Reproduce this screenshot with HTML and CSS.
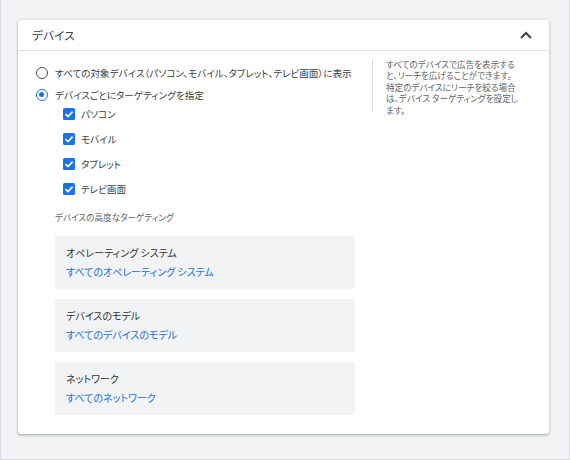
FILE: index.html
```html
<!DOCTYPE html>
<html lang="ja">
<head>
<meta charset="utf-8">
<link rel="stylesheet" href="styles.css">
</head>
<body>
<div class="page">
  <section class="card">
    <header class="card-head">
      <h2 class="card-title">デバイス</h2>
      <svg class="chevron" width="14" height="10" viewBox="0 0 14 10"><polyline points="2,8 7,3 12,8" fill="none" stroke="#3c4043" stroke-width="2"/></svg>
    </header>
    <div class="card-body">
      <div class="main">
        <label class="radio-row"><span class="radio"></span><span>すべての対象デバイス（パソコン、モバイル、タブレット、テレビ画面）に表示</span></label>
        <label class="radio-row"><span class="radio checked"></span><span>デバイスごとにターゲティングを指定</span></label>
        <ul class="checks">
          <li class="check-row"><span class="checkbox"><svg width="12" height="12" viewBox="0 0 12 12"><polyline points="2.5,6.2 5,8.6 9.6,3.6" fill="none" stroke="#fff" stroke-width="1.6"/></svg></span>パソコン</li>
          <li class="check-row"><span class="checkbox"><svg width="12" height="12" viewBox="0 0 12 12"><polyline points="2.5,6.2 5,8.6 9.6,3.6" fill="none" stroke="#fff" stroke-width="1.6"/></svg></span>モバイル</li>
          <li class="check-row"><span class="checkbox"><svg width="12" height="12" viewBox="0 0 12 12"><polyline points="2.5,6.2 5,8.6 9.6,3.6" fill="none" stroke="#fff" stroke-width="1.6"/></svg></span>タブレット</li>
          <li class="check-row"><span class="checkbox"><svg width="12" height="12" viewBox="0 0 12 12"><polyline points="2.5,6.2 5,8.6 9.6,3.6" fill="none" stroke="#fff" stroke-width="1.6"/></svg></span>テレビ画面</li>
        </ul>
        <div class="advanced">
          <div class="sub-head">デバイスの高度なターゲティング</div>
          <div class="box">
            <div class="box-title">オペレーティング システム</div>
            <a class="box-link">すべてのオペレーティング システム</a>
          </div>
          <div class="box">
            <div class="box-title">デバイスのモデル</div>
            <a class="box-link">すべてのデバイスのモデル</a>
          </div>
          <div class="box">
            <div class="box-title">ネットワーク</div>
            <a class="box-link">すべてのネットワーク</a>
          </div>
        </div>
      </div>
      <aside class="help">すべてのデバイスで広告を表示する<br>と、リーチを広げることができます。<br>特定のデバイスにリーチを絞る場合<br>は、デバイス ターゲティングを設定し<br>ます。</aside>
    </div>
  </section>
</div>
</body>
</html>
```
FILE: styles.css
```css
html, body {
  margin: 0;
  padding: 0;
}
body {
  width: 570px;
  height: 460px;
  background: #f1f3f4;
  font-family: "Noto Sans CJK JP", "Noto Sans", sans-serif;
  font-feature-settings: "palt";
  color: #3c4043;
  overflow: hidden;
}
.page {
  box-sizing: border-box;
  height: 460px;
  padding: 20px 20px 0 18px;
  border-left: 1px solid #dadce0;
  border-right: 1px solid #dadce0;
  border-bottom: 1px solid #dadce0;
}
.card {
  background: #fff;
  border-radius: 3px;
  height: 414px;
  box-shadow: 0 1px 2px rgba(60,64,67,.3), 0 1px 3px 1px rgba(60,64,67,.12);
  margin-left: -1px;
}
.card-head {
  height: 30px;
  border-bottom: 1px solid #e3e3e3;
  display: flex;
  align-items: center;
  justify-content: space-between;
  padding: 0 16px 0 14px;
}
.card-title {
  margin: 0;
  font-size: 11.5px;
  font-weight: normal;
  color: #3c4043;
  letter-spacing: 0.3px;
}
.chevron { display: block; }
.card-body {
  display: flex;
  padding: 11px 0 0 18px;
}
.main {
  width: 336px;
  flex: none;
}
.radio-row {
  display: flex;
  align-items: center;
  height: 22px;
  font-size: 9.6px;
  gap: 7px;
}
.radio {
  width: 12px;
  height: 12px;
  box-sizing: border-box;
  border: 1.7px solid #4a4e52;
  border-radius: 50%;
  flex: none;
  position: relative;
}
.radio.checked {
  border-color: #1a73e8;
}
.radio.checked::after {
  content: "";
  position: absolute;
  left: 1.8px; top: 1.8px;
  width: 5px; height: 5px;
  border-radius: 50%;
  background: #1a73e8;
}
.checks {
  list-style: none;
  margin: -5px 0 0;
  padding: 0 0 0 27px;
}
.check-row {
  display: flex;
  align-items: center;
  height: 25px;
  gap: 6px;
  font-size: 9.6px;
}
.checkbox {
  width: 12px;
  height: 12px;
  background: #1a73e8;
  border-radius: 1.5px;
  flex: none;
}
.checkbox svg { display: block; }
.advanced {
  padding: 9px 0 0 19px;
}
.sub-head {
  font-size: 8.6px;
  line-height: 14px;
  color: #5f6368;
  margin-bottom: 12px;
}
.box {
  width: 300px;
  box-sizing: border-box;
  background: #f1f3f4;
  padding: 10px 11px;
  display: flex;
  flex-direction: column;
  gap: 5px;
  margin-bottom: 10px;
}
.box-title {
  font-size: 10px;
  line-height: 14px;
  color: #2f3336;
}
.box-link {
  font-size: 10px;
  line-height: 14px;
  color: #1f6fd6;
}
.help {
  margin-top: -3px;
  border-left: 1px solid #dadce0;
  padding-left: 13px;
  font-size: 8.6px;
  line-height: 11.4px;
  color: #5f6368;
  align-self: flex-start;
  height: 53px;
}
```
